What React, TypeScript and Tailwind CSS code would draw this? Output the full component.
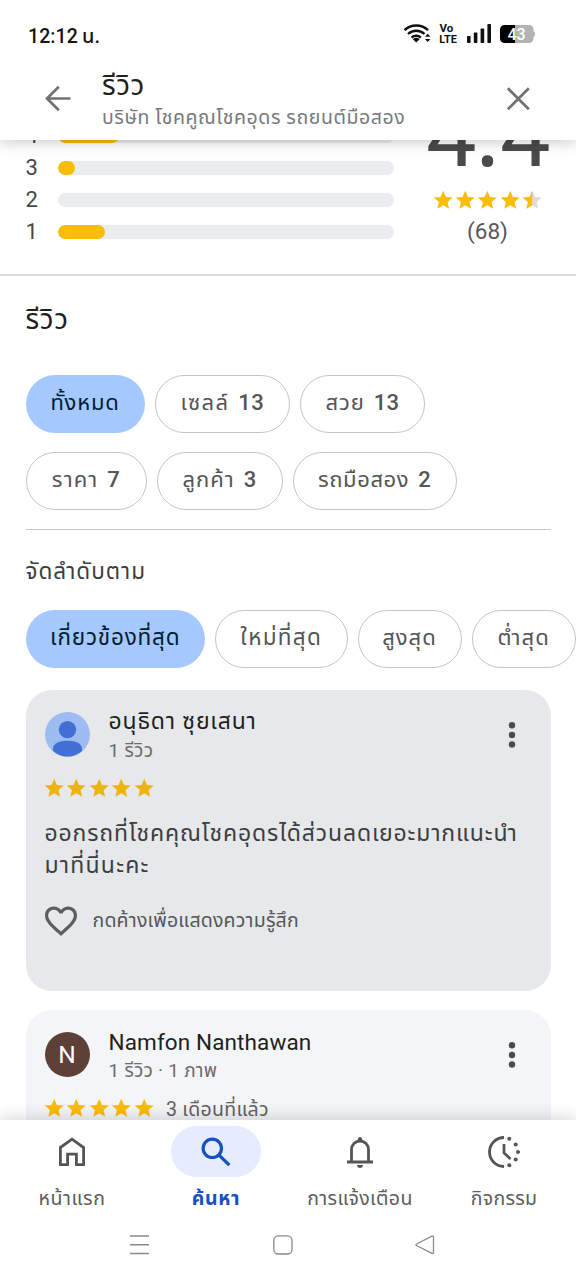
import React from "react";

const STAR = "M12 17.27 18.18 21l-1.64-7.03L22 9.24l-7.19-.61L12 2 9.19 8.63 2 9.24l5.46 4.73L5.82 21z";

function Stars({ half = false, color = "#fbbc04" }: { half?: boolean; color?: string }) {
  return (
    <div className="flex">
      {[0, 1, 2, 3, 4].map((i) => (
        <svg key={i} className="h-[22.4px] w-[22.4px]" viewBox="0.2 0.2 23.5 23.5">
          {half && i === 4 ? (
            <>
              <path d={STAR} fill="#dadce0" />
              <path d="M12 17.27 5.82 21l1.64-7.03L2 9.24l7.19-.61L12 2z" fill={color} />
            </>
          ) : (
            <path d={STAR} fill={color} />
          )}
        </svg>
      ))}
    </div>
  );
}

function Bar({ label, fill }: { label: string; fill: string }) {
  return (
    <div className="flex h-8 items-center">
      <span className="w-8 text-[22px] leading-8 text-[#474747]">{label}</span>
      <div className="h-[14.5px] w-[336.5px] overflow-hidden rounded-full bg-[#ebecee]">
        <div className={"h-full rounded-full bg-[#fbbc04] " + fill} />
      </div>
    </div>
  );
}

function Chip({ text, count, active = false, width, tracking = "tracking-[0.6px]" }: { text: string; count?: string; active?: boolean; width: string; tracking?: string }) {
  return (
    <div
      className={
        "flex h-[57.5px] shrink-0 items-center justify-center gap-[9px] rounded-full pb-0.5 text-[22px] whitespace-nowrap " +
        (active ? "bg-[#a5c8ff] text-[#001d35] " : "border border-[#c6c6c6] text-[#545557] ") +
        width
      }
    >
      <span className={tracking}>{text}</span>
      {count && <span className="font-medium tracking-[0.3px]">{count}</span>}
    </div>
  );
}

function Dots() {
  return (
    <svg className="h-7 w-2" viewBox="0 0 8 28" fill="#4a4c4f">
      <circle cx="4" cy="4.3" r="3.2" />
      <circle cx="4" cy="14" r="3.2" />
      <circle cx="4" cy="23.5" r="3.2" />
    </svg>
  );
}

function Status() {
  return (
    <div className="flex h-[60px] items-center pt-1.5 pl-7">
      <div className="flex items-baseline pt-1.5 text-[19.5px] font-medium text-[#151515]">
        <span className="w-[54px] tracking-[0.1px]">12:12</span>
        <span className="text-[20px]">น.</span>
      </div>
      <svg className="ml-auto h-6 w-[134px]" viewBox="0 0 134 24">
        <g fill="none" stroke="#111" strokeWidth="2.4">
          <path d="M1.5 9.2a17 17 0 0 1 23.5 0" />
          <path d="M5 13a12 12 0 0 1 16.5 0" />
          <path d="M8.6 16.6a6.8 6.8 0 0 1 9.2 0" />
        </g>
        <path d="M13.2 21.6 9.8 18.2a4.8 4.8 0 0 1 6.8 0z" fill="#111" />
        <path d="M22 15.7l2.7-3 2.7 3zM22 18l2.7 3 2.7-3z" fill="#111" />
        <text x="36.5" y="11.3" fontSize="11.5" fontWeight="700" fill="#111">Vo</text>
        <text x="36.3" y="21.8" fontSize="11.5" fontWeight="700" fill="#111" textLength="17.5" lengthAdjust="spacingAndGlyphs">LTE</text>
        <g fill="#111">
          <rect x="64" y="15" width="3.6" height="7" rx="0.7" />
          <rect x="70.8" y="11.5" width="3.6" height="10.5" rx="0.7" />
          <rect x="77.6" y="7.5" width="3.6" height="14.5" rx="0.7" />
          <rect x="84.4" y="3" width="3.6" height="19" rx="0.7" />
        </g>
        <path d="M112 4h14a4.500 4.500 0 0 1 4.500 4.500v1.700c2.200.4 2.200 5.200 0 5.600v1.700a4.500 4.500 0 0 1-4.500 4.500h-14z" fill="#b3b3b3" />
        <path d="M112 4h-10.500a4.500 4.500 0 0 0-4.500 4.500v9a4.500 4.500 0 0 0 4.500 4.500h10.500z" fill="#000" />
        <text x="104.500" y="18.700" fontSize="16" fontWeight="500" fill="#fff">43</text>
      </svg>
      <div className="w-[39px]" />
    </div>
  );
}

export default function App() {
  return (
    <div className="flex h-[1280px] w-[576px] flex-col overflow-hidden bg-white font-['Roboto','Noto_Sans_Thai','Noto_Sans',sans-serif]">
      <header className="relative z-10 h-[140px] shrink-0 bg-white shadow-[0_2px_14px_rgba(0,0,0,0.22)]">
        <Status />
        <div className="flex h-20">
          <svg className="mt-[25px] ml-[45px] h-7 w-[26px]" viewBox="0 0 26 28" fill="none" stroke="#6f7275" strokeWidth="2.7">
            <path d="M25.500 13.500H2M13.800 1.800 2 13.500l11.800 11.700" />
          </svg>
          <div className="ml-[31px] w-[404px]">
            <div className="mt-2 h-9 text-[28px] leading-9 tracking-[0.5px] text-[#1f1f1f]">รีวิว</div>
            <div className="h-7 text-[19.500px] leading-7 tracking-[0.57px] whitespace-nowrap text-[#77797c]">บริษัท โชคคูณโชคอุดร รถยนต์มือสอง</div>
          </div>
          <svg className="mt-[27px] h-6 w-6" viewBox="0 0 24 24" fill="none" stroke="#6f7275" strokeWidth="2.7">
            <path d="m1.800 1.300 21 21M22.800 1.300l-21 21" />
          </svg>
        </div>
      </header>

      <main className="h-[980px] shrink-0 overflow-hidden">
        <section className="-mt-5 flex h-[156px] border-b-2 border-[#dadce0] pl-[25.500px]">
          <div>
            <Bar label="4" fill="w-[61px]" />
            <Bar label="3" fill="w-[17px]" />
            <Bar label="2" fill="w-0" />
            <Bar label="1" fill="w-[47px]" />
          </div>
          <div className="ml-[25px] flex w-[137px] flex-col items-center">
            <div className="-mt-10 h-[108px] text-[90px] leading-[112px] text-[#4a4a4a]">
              <span className="inline-block w-[49px]">4</span>
              <span className="inline-block w-[25px] text-center font-['Open_Sans',sans-serif] text-[80px] leading-none font-semibold">.</span>
              <span className="inline-block w-[49px]">4</span>
            </div>
            <div className="flex h-6 items-center"><Stars half /></div>
            <div className="mt-[3px] h-8 text-[22.500px] leading-8 text-[#55575a]">(68)</div>
          </div>
        </section>

        <section className="pl-[25.500px]">
          <h2 className="mt-6 h-10 text-[28px] leading-10 tracking-[0.7px] text-[#1f1f1f]">รีวิว</h2>
          <div className="mt-[35px] flex gap-[10px]">
            <Chip text="ทั้งหมด" active width="w-[119px]" tracking="tracking-[0.8px]" />
            <Chip text="เซลล์" count="13" width="w-[135.500px]" tracking="tracking-[1.300px]" />
            <Chip text="สวย" count="13" width="w-[125px]" tracking="tracking-[0.900px]" />
          </div>
          <div className="mt-[19.500px] flex gap-[10px]">
            <Chip text="ราคา" count="7" width="w-[121px]" tracking="tracking-[1.100px]" />
            <Chip text="ลูกค้า" count="3" width="w-[126px]" tracking="tracking-[1px]" />
            <Chip text="รถมือสอง" count="2" width="w-[164px]" />
          </div>
          <div className="mt-[19px] h-px w-[525px] bg-[#c8c8c8]" />
          <div className="mt-[25.500px] h-8 text-[22.500px] leading-8 tracking-[1px] text-[#3c3e41]">จัดลำดับตาม</div>
          <div className="mt-[23px] flex gap-[10px]">
            <Chip text="เกี่ยวข้องที่สุด" active width="w-[179.500px]" tracking="pt-px text-[22.500px] tracking-[0.800px]" />
            <Chip text="ใหม่ที่สุด" width="w-[132.500px]" tracking="pt-px text-[22.500px] tracking-[1.300px]" />
            <Chip text="สูงสุด" width="w-[104px]" tracking="tracking-[1px]" />
            <Chip text="ต่ำสุด" width="w-[104.500px]" tracking="tracking-[1.200px]" />
          </div>

          <article className="mt-[22.500px] h-[301px] w-[525px] rounded-[26px] bg-[#e6e8ea] px-[19px] pt-4">
            <div className="flex h-[59px]">
              <svg className="mt-1.5 h-[45px] w-[45px]" viewBox="0 0 45 45">
                <circle cx="22.500" cy="22.500" r="22.500" fill="#9dbcf2" />
                <circle cx="22.500" cy="17.600" r="8.700" fill="#416fd6" />
                <path d="M8 38v-1.500C8.500 31 15 28.800 22.500 28.800S36.500 31 37 36.500V38a20.500 20.500 0 0 1-29 0z" fill="#416fd6" />
                <path d="M8 38.800a21 21 0 0 0 29 0v-1H8z" fill="#416fd6" />
              </svg>
              <div className="ml-[19px] w-[399px] pt-px whitespace-nowrap">
                <div className="h-[30px] text-[23px] leading-[30px] tracking-[0.800px] text-[#1f1f1f]">อนุธิดา ซุยเสนา</div>
                <div className="h-7 text-[19px] leading-7 tracking-[0.300px] text-[#6b6d70]">1 รีวิว</div>
              </div>
              <div className="mt-[15px]"><Dots /></div>
            </div>
            <div className="mt-[11px] -ml-[1.500px] flex h-6 items-center"><Stars color="#edb410" /></div>
            <p className="mt-[18px] text-[23px] leading-8 tracking-[0.860px] whitespace-nowrap text-[#3c3e41]">
              ออกรถที่โชคคุณโชคอุดรได้ส่วนลดเยอะมากแนะนำ<br /><span className="tracking-[1.200px]">มาที่นี่นะคะ</span>
            </p>
            <div className="mt-[18.500px] flex h-10 items-center">
              <svg className="h-8 w-8" viewBox="2 2 20 20" fill="#5b5d60">
                <path d="M16.500 3c-1.740 0-3.410.81-4.500 2.090C10.910 3.810 9.240 3 7.500 3 4.420 3 2 5.420 2 8.500c0 3.780 3.400 6.860 8.550 11.540L12 21.350l1.450-1.320C18.600 15.360 22 12.280 22 8.500 22 5.420 19.580 3 16.500 3m-4.400 15.550-.1.1-.1-.1C7.140 14.240 4 11.390 4 8.500 4 6.500 5.500 5 7.500 5c1.540 0 3.040.99 3.570 2.360h1.870C13.460 5.990 14.960 5 16.500 5c2 0 3.500 1.500 3.500 3.500 0 2.890-3.140 5.740-7.900 10.050" />
              </svg>
              <span className="ml-4 pt-px text-[19.500px] tracking-[0.200px] whitespace-nowrap text-[#55575a]">กดค้างเพื่อแสดงความรู้สึก</span>
            </div>
          </article>

          <article className="mt-[19px] h-[301px] w-[525px] rounded-[26px] bg-[#f4f5f7] px-[19px] pt-4">
            <div className="flex h-[59px]">
              <div className="mt-1.5 flex h-[45px] w-[45px] items-center justify-center rounded-full bg-[#5d4037] pt-px text-[24.500px] text-white">N</div>
              <div className="ml-[19px] w-[399px] pt-px whitespace-nowrap">
                <div className="h-[30px] text-[22.500px] leading-[30px] tracking-[0.120px] text-[#1f1f1f]">Namfon Nanthawan</div>
                <div className="h-7 text-[19px] leading-7 tracking-[0.250px] text-[#6b6d70]">1 รีวิว · 1 ภาพ</div>
              </div>
              <div className="mt-[15px]"><Dots /></div>
            </div>
            <div className="mt-[11px] -ml-[1.500px] flex h-6 items-center">
              <Stars />
              <span className="ml-[11px] pt-1 text-[19.500px] tracking-[0.300px] whitespace-nowrap text-[#5f6164]">3 เดือนที่แล้ว</span>
            </div>
          </article>
        </section>
      </main>

      <footer className="relative z-10 h-40 shrink-0 bg-white shadow-[0_-2px_16px_rgba(0,0,0,0.16)]">
        <nav className="grid h-[94px] grid-cols-4 pt-1.5 text-[19.500px] whitespace-nowrap text-[#5b5d60]">
          <div className="flex flex-col items-center">
            <div className="flex h-[51px] w-[90px] items-center justify-center">
              <svg className="h-[30px] w-7" viewBox="0 0 28 30" fill="none" stroke="#555" strokeWidth="2.800">
                <path d="M2.400 10.500 14 2.200l11.600 8.300v17.100h-7.200V17.200H9.600v10.400H2.400z" />
              </svg>
            </div>
            <span className="mt-2 leading-7 tracking-[0.600px]">หน้าแรก</span>
          </div>
          <div className="flex flex-col items-center">
            <div className="flex h-[51px] w-[90px] items-center justify-center rounded-full bg-[#e5ecfd]">
              <svg className="h-[30px] w-[30px]" viewBox="0 0 30 30" fill="none" stroke="#1552c0" strokeWidth="3.200">
                <circle cx="11.300" cy="11.300" r="9.200" />
                <path d="m17.800 17.800 10.500 10.400" />
              </svg>
            </div>
            <span className="mt-2 leading-7 font-bold tracking-[0.700px] text-[#1552c0]">ค้นหา</span>
          </div>
          <div className="flex flex-col items-center">
            <div className="flex h-[51px] w-[90px] items-center justify-center">
              <svg className="h-8 w-7" viewBox="0 0 28 32">
                <path d="M5.500 26V13.500a8.500 8.500 0 0 1 17 0V26M1 26h26" fill="none" stroke="#555" strokeWidth="2.800" />
                <circle cx="14" cy="3.200" r="2.200" fill="#555" />
                <path d="M11 29h6a3 3 0 0 1-6 0z" fill="#555" />
              </svg>
            </div>
            <span className="mt-2 leading-7 tracking-[0.400px]">การแจ้งเตือน</span>
          </div>
          <div className="flex flex-col items-center">
            <div className="flex h-[51px] w-[90px] items-center justify-center">
              <svg className="h-8 w-8" viewBox="0 0 32 32" fill="none" stroke="#555" strokeWidth="2.800">
                <path d="M16 1.500a14.500 14.500 0 0 0 0 29M16 8v9l6.500 6" />
                <g fill="#555" stroke="none">
                  <circle cx="21.300" cy="2.800" r="2" />
                  <circle cx="27.700" cy="8.500" r="2" />
                  <circle cx="30" cy="16" r="2" />
                  <circle cx="27.700" cy="23.600" r="2" />
                  <circle cx="21.300" cy="29.200" r="2" />
                </g>
              </svg>
            </div>
            <span className="mt-2 leading-7 tracking-[0.300px]">กิจกรรม</span>
          </div>
        </nav>
        <div className="flex h-[62px] items-center pl-[130px]">
          <svg className="h-5 w-5" viewBox="0 0 20 20" stroke="#8a8a8a" strokeWidth="1.500">
            <path d="M0 1h19M0 9.800h19M0 18.500h19" />
          </svg>
          <svg className="ml-[123px] h-5 w-5" viewBox="0 0 20 20" fill="none" stroke="#8a8a8a" strokeWidth="1.300">
            <rect x="0.800" y="0.800" width="18.200" height="18.200" rx="4.500" />
          </svg>
          <svg className="ml-[122px] h-5 w-5" viewBox="0 0 20 20" fill="none" stroke="#8a8a8a" strokeWidth="1.300" strokeLinejoin="round">
            <path d="M17 1.200 1.500 9c-.8.400-.8 1.100 0 1.500L17 18.400c.8.300 1.500 0 1.500-.8V2c0-.8-.7-1.200-1.500-.8z" />
          </svg>
        </div>
      </footer>
    </div>
  );
}
